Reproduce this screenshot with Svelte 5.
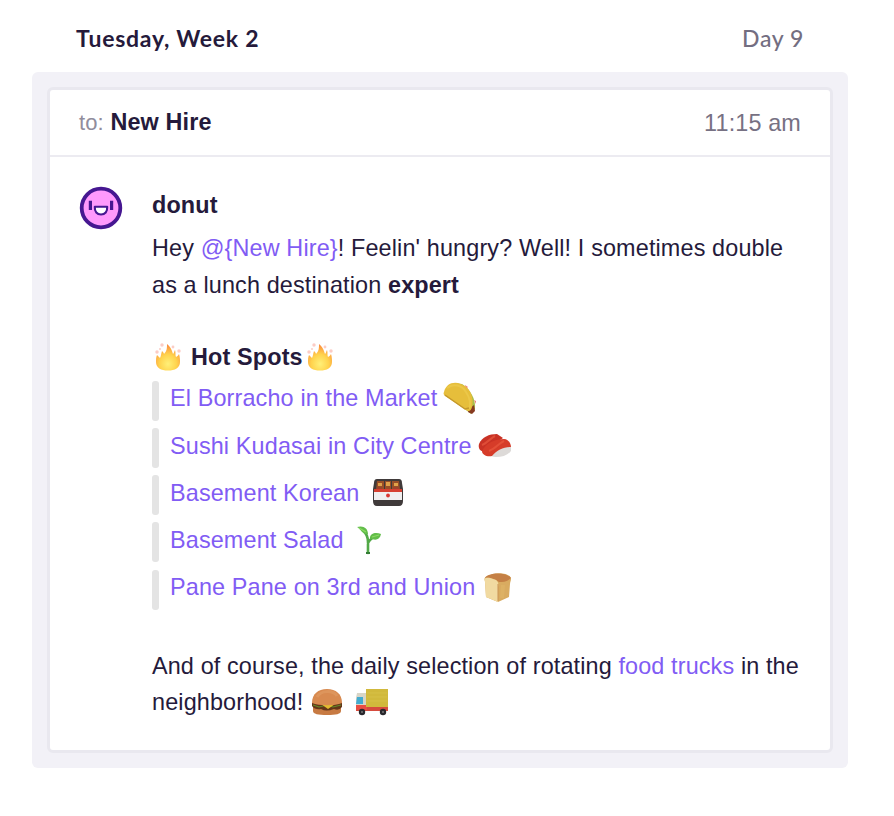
<script>
  const spots = [
    { name: 'El Borracho in the Market', icon: 'taco', gap: 6 },
    { name: 'Sushi Kudasai in City Centre', icon: 'sushi', gap: 6 },
    { name: 'Basement Korean', icon: 'bento', gap: 13 },
    { name: 'Basement Salad', icon: 'sprout', gap: 12 },
    { name: 'Pane Pane on 3rd and Union', icon: 'bread', gap: 8 }
  ];
</script>

{#snippet fire()}
  <svg class="fire" viewBox="0 0 28 30" width="28" height="30">
    <defs>
      <radialGradient id="flame" cx=".5" cy=".75" r=".72">
        <stop offset="0" stop-color="#fff078" /><stop offset=".5" stop-color="#ffd34d" /><stop offset="1" stop-color="#fb8b3b" />
      </radialGradient>
    </defs>
    <g fill="#fa9b8c" opacity=".5"><circle cx="8" cy="3" r="1.7" /><circle cx="19" cy="5" r="1.4" /><circle cx="3" cy="10" r="1.7" /><circle cx="25" cy="9" r="1.7" /><circle cx="6" cy="7" r="1" /></g>
    <path d="M3 13c1 1 2 2 3 3 1-2 1-4 2-7 1 1 2 2 2 3 3-3 3-6 3-10 4 3 5 7 6 10 1-1 1-2 2-4 1 3 0 5 1 7 1-1 2-1 3-3 1 3 1 6 1 8 0 6-5 8.500-12 8.500S2 26 2 20c0-2 0-5 1-7z" fill="url(#flame)" />
  </svg>
{/snippet}

<main>
  <header class="day"><strong>Tuesday, Week 2</strong><span>Day 9</span></header>
  <section class="panel">
    <article class="card">
      <div class="recipient">
        <div><span class="to">to:</span> <b>New Hire</b></div>
        <time>11:15 am</time>
      </div>
      <div class="message">
        <svg class="avatar" viewBox="0 0 44 44" width="44" height="44">
          <circle cx="22" cy="22" r="19.3" fill="#ff99fc" stroke="#461791" stroke-width="3.8" />
          <path d="M11.4 14.8v9.2M32.6 14.8v9.2" stroke="#461791" stroke-width="3.2" />
          <path d="M15.8 20.8h12.400c.3 5-2.200 7.700-6.200 7.700s-6.500-2.700-6.200-7.700z" fill="#fff" stroke="#461791" stroke-width="2.1" stroke-linejoin="round" />
        </svg>
        <div class="content">
          <b class="sender">donut</b>
          <p><span class="line">Hey <a>@&#123;New Hire&#125;</a>! Feelin' hungry? Well! I sometimes double</span><span class="line">as a lunch destination <b>expert</b></span></p>
          <h2>{@render fire()}<span>Hot Spots</span>{@render fire()}</h2>
          <ul>
            {#each spots as spot}
              <li>
                <a>{spot.name}</a>
                <span class="emoji" style:margin-left="{spot.gap}px">
                  {#if spot.icon === 'taco'}
                    <svg viewBox="0 0 34 34" width="34" height="34">
                      <path d="M10 1l9 1c8 5 14 15 13 25l-4 5-5-4z" fill="#a9bd4b" />
                      <path d="M22 3l3 2-2 2zM31 18l2 1v3z" fill="#ed827d" />
                      <path d="M26 27l5-4 1 6-3 3-4-2z" fill="#873a21" />
                      <path d="M1 10C3 2 10-1 18 2c10 4 13 14 11 23-1 4-3 5-6 3L2 14c-1-1-2-2-1-4z" fill="#e6be3b" />
                      <path d="M4 6c6-5 15-3 19 4 4 6 5 12 3 17" fill="none" stroke="#ebc748" stroke-width="2" />
                      <path d="M2 13l20 14 4-1" fill="none" stroke="#c4982c" stroke-width="1.3" />
                    </svg>
                  {:else if spot.icon === 'sushi'}
                    <svg viewBox="0 0 34 28" width="34" height="28">
                      <path d="M12 19L29 13l4 2v4c-3 4-9 6-15 6-5 0-7-2-6-6z" fill="#dddad8" />
                      <path d="M1 12C4 5 11 2 19 2l6 4L6 19c-4 1-6-3-5-7z" fill="#c93225" />
                      <path d="M4 19C8 11 17 7 26 7c4 0 7 4 7 8-8 0-14 3-19 9-5 1-10-1-10-5z" fill="#d63c29" />
                      <path d="M4 13c5-2 9-7 13-9M11 19c6-2 9-7 15-10" fill="none" stroke="#e8593f" stroke-width="2" opacity=".7" />
                    </svg>
                  {:else if spot.icon === 'bento'}
                    <svg viewBox="0 0 32 30" width="32" height="30">
                      <path d="M5 1h22q3 0 3 4l1 6v12q0 5-4 5H5q-4 0-4-5V11l1-6q0-4 3-4z" fill="#403a3a" />
                      <path d="M5 3h7v9H4zM13 3h6v9h-6zM20 3h7l1 9h-8z" fill="#9a4f27" />
                      <path d="M6 5h4v3H6zM14 4h4v4h-4zM22 5h4v3h-4z" fill="#e0a24a" /><path d="M5 9h5v2H5zM21 9h6v2h-6z" fill="#9d432d" />
                      <path d="M2 11h28v3H2z" fill="#d64031" /><path d="M2 14h28v8H2z" fill="#f0efef" />
                      <circle cx="16" cy="17.5" r="1.9" fill="#d93832" />
                    </svg>
                  {:else if spot.icon === 'sprout'}
                    <svg viewBox="0 0 27 30" width="27" height="30">
                      <path d="M12 28V17c0-6-2-9-5-12M12 18c2-4 5-6 9-6" fill="none" stroke="#52a947" stroke-width="2.6" stroke-linecap="round" />
                      <path d="M1 2c6-2 11 1 11 7C6 10 5 4 1 2zM14 13c0-5 6-6 11-4-1 6-6 7-11 4z" fill="#62bd4a" />
                      <path d="M3 3l7 4M16 12l7-2" stroke="#8bdb62" stroke-width="1.3" /><path d="M10 28h4" stroke="#347d35" stroke-width="2" />
                    </svg>
                  {:else}
                    <svg viewBox="0 0 30 32" width="30" height="32">
                      <path d="M2 9C0 5 4 4 10 2c7-2 18 0 18 5 0 2-1 3-1 5l-1 13-11 5-12-5z" fill="#d9ab60" />
                      <path d="M2 6c3-6 22-6 26 0-4 4-8 4-12 4C12 7 7 5 2 6z" fill="#c58045" />
                      <path d="M2 10C0 5 5 5 10 7c5 1 6 4 5 8v15L3 25z" fill="#f1daa1" />
                      <path d="M15 12v17" stroke="#c99454" /><path d="M20 13l-1 13" stroke="#e5ba6b" stroke-width="4" opacity=".4" />
                    </svg>
                  {/if}
                </span>
              </li>
            {/each}
          </ul>
          <p class="closing">
            <span class="line closing-text">And of course, the daily selection of rotating <a>food trucks</a> in the</span>
            <span class="line">neighborhood!<svg class="burger" viewBox="0 0 32 28" width="32" height="28">
                <path d="M2 18h28v5c0 3-5 4-14 4S2 26 2 23z" fill="#c77a42" />
                <path d="M1 15h30v4q-3 4-8 2-8 3-13 0-6 1-9-3z" fill="#653619" />
                <path d="M2 17l6 2 8-2 6 2 8-2" fill="none" stroke="#628b28" stroke-width="1.2" />
                <path d="M10 16h14l-7 5z" fill="#e4bb30" />
                <path d="M1 15C1 6 7 1 16 1s15 5 15 14c-7 3-23 3-30 0z" fill="#d88a50" />
                <path d="M6 9c4-7 16-7 20-1" fill="none" stroke="#df9a61" stroke-width="3" opacity=".7" />
              </svg><svg class="truck" viewBox="0 0 34 28" width="34" height="28">
                <path d="M1 18h32v5H1z" fill="#d64b3e" /><path d="M1 10l1-5h10v14H1z" fill="#d8d5c7" /><path d="M2 9h6v7H1z" fill="#43acd0" />
                <path d="M1 17h11v5H1z" fill="#e94e43" /><path d="M11 1h22v18H11z" fill="#d1b93c" /><path d="M12 5h20M12 9h20M12 13h20" stroke="#d6c047" />
                <circle cx="7" cy="24" r="3.2" fill="#28272c" /><circle cx="28" cy="24" r="3.2" fill="#28272c" /><circle cx="7" cy="24" r="1" fill="#777" /><circle cx="28" cy="24" r="1" fill="#777" />
              </svg></span>
          </p>
        </div>
      </div>
    </article>
  </section>
</main>

<style>
  :global(body) { background: #fff; }
  main { box-sizing: border-box; width: 894px; height: 816px; padding: 0 46px 0 32px; color: #251a3b; font: 23.4px/36.5px "Liberation Sans", Arial, sans-serif; letter-spacing: .14px; }
  .day { display: flex; justify-content: space-between; box-sizing: border-box; height: 72px; padding: 20px 44px 0; font: 600 23px/36px Lato, sans-serif; letter-spacing: .75px; }
  .day strong { font-weight: 700; }
  .day span { color: #736e81; font-weight: 500; letter-spacing: .6px; }
  .panel { box-sizing: border-box; height: 696px; padding: 15px; border-radius: 6px; background: #f2f1f7; }
  .card { box-sizing: border-box; height: 666px; border: 3px solid #e9e8ef; border-radius: 6px; background: #fff; }
  .recipient { display: flex; justify-content: space-between; align-items: center; box-sizing: border-box; height: 67px; padding: 1px 29px 0; border-bottom: 2px solid #ecebf1; }
  .to { color: #918d9c; font-size: 22px; letter-spacing: .1px; }
  time { color: #777183; }
  .message { display: flex; }
  .avatar { flex: none; margin: 29px 0 0 29px; }
  .content { margin-left: 29px; padding-top: 36px; }
  .sender { display: block; height: 24px; line-height: 24px; }
  p { margin: 13px 0 0; }
  a { color: #815cf4; }
  .line { display: flex; align-items: center; height: 36.5px; white-space: pre; }
  .closing-text { letter-spacing: .13px; }
  h2 { display: flex; align-items: center; margin: 36px 0 0; height: 36.5px; font-size: 23.4px; }
  h2 span { margin: 0 1px 0 11px; }
  .fire { position: relative; left: 2px; }
  ul { display: flex; flex-direction: column; gap: 7.3px; list-style: none; padding: 0; margin: 5px 0 0; }
  li { display: flex; align-items: center; box-sizing: border-box; height: 40px; padding: 0 0 4px 11px; position: relative; margin-left: 7px; white-space: nowrap; }
  li::before { content: ""; position: absolute; left: -7px; top: 0; width: 7px; height: 40px; border-radius: 3px; background: #e4e4e4; }
  .emoji { display: flex; }
  svg { display: block; flex: none; }
  .closing { margin-top: 38px; }
  .burger { margin-left: 8px; }
  .truck { margin-left: 12px; }
</style>
